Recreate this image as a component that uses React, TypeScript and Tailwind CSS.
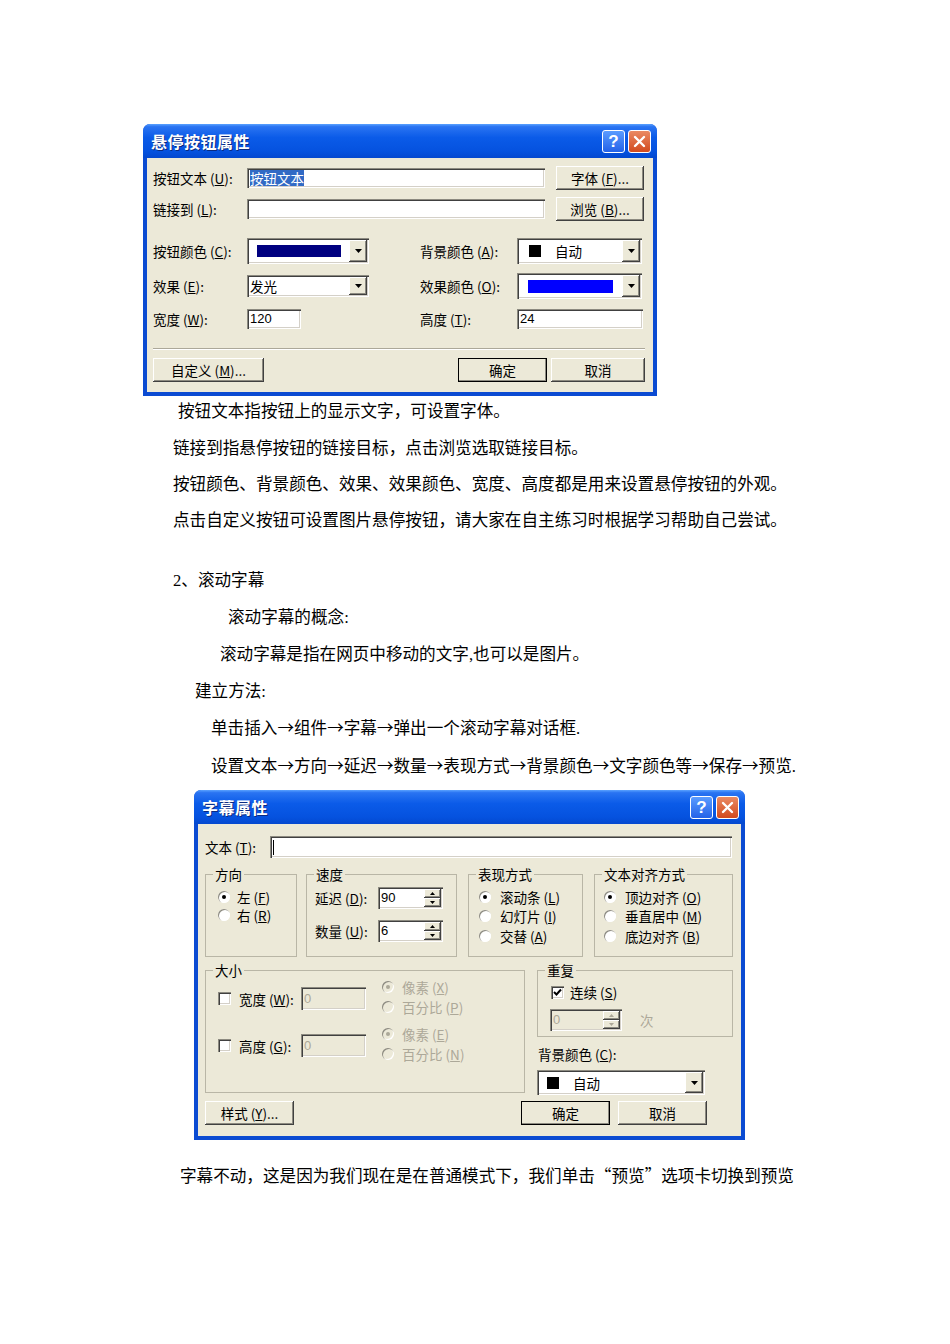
import React from 'react'

const raised =
  'bg-[#ece9d8] shadow-[inset_-1px_-1px_0_#404040,inset_1px_1px_0_#ffffff,inset_-2px_-2px_0_#8c8a80]'
const sunken =
  'shadow-[inset_1px_1px_0_#8c8a80,inset_2px_2px_0_#404040,inset_-1px_-1px_0_#ffffff,inset_-2px_-2px_0_#d4d0c8]'

function K({ k }: { k: string }) {
  return (
    <>
      {' '}(<span className="underline">{k}</span>)
    </>
  )
}

// full-width glyphs (arrows, quotes) taken from the CJK font
function W({ c }: { c: string }) {
  return <span className="font-['Noto_Sans_CJK_SC',sans-serif] leading-none">{c}</span>
}

function TitleBar({ title }: { title: string }) {
  return (
    <div className="h-[34px] flex items-center justify-between pl-[8px] pr-[6px] bg-[linear-gradient(to_bottom,#5aa2ff_0%,#2a74f2_8%,#0b5be8_40%,#0552df_80%,#0448cf_100%)]">
      <span className="text-white font-bold text-[16px] tracking-[0.5px] [text-shadow:1px_1px_0_#0a2a80]">
        {title}
      </span>
      <div className="flex gap-[3px] mt-[1px]">
        <div className="w-[23px] h-[23px] rounded-[3px] border border-white bg-[linear-gradient(to_bottom,#5a9cff,#2462e8)] flex items-center justify-center text-white font-bold text-[17px] leading-none font-['Liberation_Sans',sans-serif]">
          ?
        </div>
        <div className="w-[23px] h-[23px] rounded-[3px] border border-white bg-[linear-gradient(to_bottom,#ea8a63,#d24a1e)] flex items-center justify-center">
          <svg width="13" height="13" viewBox="0 0 13 13">
            <path d="M2 2 L11 11 M11 2 L2 11" stroke="#ffffff" strokeWidth="2.4" strokeLinecap="round" />
          </svg>
        </div>
      </div>
    </div>
  )
}

function Btn({ children, className = '', def = false }: { children: React.ReactNode; className?: string; def?: boolean }) {
  return (
    <div
      className={`h-[24px] flex items-center justify-center ${raised} ${def ? 'outline outline-1 outline-black -outline-offset-1' : ''} ${className}`}
    >
      {children}
    </div>
  )
}

function Arrow() {
  return (
    <svg width="7" height="4" viewBox="0 0 7 4">
      <polygon points="0,0 7,0 3.5,4" fill="#000000" />
    </svg>
  )
}

function Combo({ children, className = '' }: { children?: React.ReactNode; className?: string }) {
  return (
    <div className={`bg-white ${sunken} flex items-center p-[2px] ${className}`}>
      <div className="flex-1 flex items-center h-full">{children}</div>
      <div className={`w-[18px] h-full flex items-center justify-center ${raised}`}>
        <Arrow />
      </div>
    </div>
  )
}

function Field({ children, className = '', disabled = false }: { children?: React.ReactNode; className?: string; disabled?: boolean }) {
  return (
    <div
      className={`${disabled ? 'bg-[#ece9d8] text-[#aca899]' : 'bg-white'} ${sunken} flex items-center pl-[3px] text-[13px] font-['Liberation_Sans','Noto_Sans_CJK_SC',sans-serif] ${className}`}
    >
      {children}
    </div>
  )
}

function Spin({ value, className = '', disabled = false }: { value: string; className?: string; disabled?: boolean }) {
  return (
    <div
      className={`${disabled ? 'bg-[#ece9d8] text-[#aca899]' : 'bg-white'} ${sunken} flex items-center p-[2px] h-[22px] ${className}`}
    >
      <span className="flex-1 pl-[1px] text-[13px] font-['Liberation_Sans',sans-serif]">{value}</span>
      <div className="w-[17px] h-full flex flex-col">
        <div className={`flex-1 flex items-center justify-center ${raised}`}>
          <svg width="5" height="3" viewBox="0 0 5 3">
            <polygon points="0,3 5,3 2.5,0" fill={disabled ? '#aca899' : '#000000'} />
          </svg>
        </div>
        <div className={`flex-1 flex items-center justify-center ${raised}`}>
          <svg width="5" height="3" viewBox="0 0 5 3">
            <polygon points="0,0 5,0 2.5,3" fill={disabled ? '#aca899' : '#000000'} />
          </svg>
        </div>
      </div>
    </div>
  )
}

function Radio({ checked = false, disabled = false }: { checked?: boolean; disabled?: boolean }) {
  return (
    <span
      className={`w-[12px] h-[12px] rounded-full ${disabled ? 'bg-[#ece9d8]' : 'bg-white'} shadow-[inset_1px_1px_0_#8c8a80,inset_-1px_-1px_0_#ffffff] flex items-center justify-center shrink-0`}
    >
      {checked && <span className={`w-[4px] h-[4px] rounded-full ${disabled ? 'bg-[#aca899]' : 'bg-black'}`} />}
    </span>
  )
}

function Check({ checked = false }: { checked?: boolean }) {
  return (
    <span className={`w-[13px] h-[13px] bg-white ${sunken} flex items-center justify-center shrink-0`}>
      {checked && (
        <svg width="9" height="9" viewBox="0 0 9 9">
          <path d="M1 4 L3.5 6.5 L8 1.5" stroke="#000000" strokeWidth="2" fill="none" />
        </svg>
      )}
    </span>
  )
}

function Group({ title, className = '', children }: { title: string; className?: string; children?: React.ReactNode }) {
  return (
    <fieldset className={`border border-[#b9b6a6] ${className}`}>
      <legend className="ml-[7px] px-[2px] leading-[16px]">{title}</legend>
      {children}
    </fieldset>
  )
}

function HoverButtonDialog() {
  return (
    <div className="w-[514px] ml-[143px] rounded-t-[7px] overflow-hidden bg-[#0b4bd2] font-['Noto_Sans_CJK_SC',sans-serif]">
      <TitleBar title="悬停按钮属性" />
      <div className="bg-[#ece9d8] mx-[4px] mb-[4px] pt-[8px] pl-[6px] pr-[8px] pb-[10px] text-[13.5px] text-black">
        <div className="flex items-center h-[24px]">
          <span className="w-[94px]">
            按钮文本<K k="U" />:
          </span>
          <Field className="w-[298px] h-[20px]">
            <span className="bg-[#316ac5] text-white font-['Noto_Sans_CJK_SC',sans-serif] text-[13.5px] leading-[16px]">按钮文本</span>
          </Field>
          <Btn className="ml-[11px] w-[88px]">
            字体<K k="F" />...
          </Btn>
        </div>
        <div className="flex items-center h-[24px] mt-[7px]">
          <span className="w-[94px]">
            链接到<K k="L" />:
          </span>
          <Field className="w-[298px] h-[20px]" />
          <Btn className="ml-[11px] w-[88px]">
            浏览<K k="B" />...
          </Btn>
        </div>
        <div className="flex items-center h-[26px] mt-[17px]">
          <span className="w-[94px]">
            按钮颜色<K k="C" />:
          </span>
          <Combo className="w-[122px] h-[26px]">
            <span className="w-[84px] h-[12px] bg-[#000080] ml-[8px]" />
          </Combo>
          <span className="ml-[51px] w-[97px]">
            背景颜色<K k="A" />:
          </span>
          <Combo className="w-[125px] h-[26px]">
            <span className="w-[12px] h-[12px] bg-black ml-[10px]" />
            <span className="ml-[14px]">自动</span>
          </Combo>
        </div>
        <div className="flex items-center h-[26px] mt-[9px]">
          <span className="w-[94px]">
            效果<K k="E" />:
          </span>
          <Combo className="w-[122px] h-[22px]">
            <span className="ml-[1px]">发光</span>
          </Combo>
          <span className="ml-[51px] w-[97px]">
            效果颜色<K k="O" />:
          </span>
          <Combo className="w-[125px] h-[26px]">
            <span className="w-[85px] h-[13px] bg-[#0000ff] ml-[9px]" />
          </Combo>
        </div>
        <div className="flex items-center h-[20px] mt-[10px]">
          <span className="w-[94px]">
            宽度<K k="W" />:
          </span>
          <Field className="w-[54px] h-[20px]">120</Field>
          <span className="ml-[119px] w-[97px]">
            高度<K k="T" />:
          </span>
          <Field className="w-[126px] h-[20px]">24</Field>
        </div>
        <div className="mt-[19px] w-[492px] h-[2px] border-t border-t-[#aca899] border-b border-b-white" />
        <div className="flex items-center justify-between mt-[8px]">
          <Btn className="w-[111px]">
            自定义<K k="M" />...
          </Btn>
          <div className="flex gap-[4px]">
            <Btn def className="w-[89px]">
              确定
            </Btn>
            <Btn className="w-[94px]">取消</Btn>
          </div>
        </div>
      </div>
    </div>
  )
}

function MarqueeDialog() {
  const dis = 'text-[#aca899]'
  return (
    <div className="w-[551px] ml-[194px] mt-[11px] rounded-t-[7px] overflow-hidden bg-[#0b4bd2] font-['Noto_Sans_CJK_SC',sans-serif]">
      <TitleBar title="字幕属性" />
      <div className="bg-[#ece9d8] mx-[4px] mb-[4px] pt-[12px] pl-[7px] pb-[11px] text-[13.5px] text-black">
        <div className="flex items-center h-[22px]">
          <span className="w-[65px]">
            文本<K k="T" />:
          </span>
          <Field className="w-[462px] h-[22px]">
            <span className="w-[1px] h-[15px] bg-black" />
          </Field>
        </div>

        <div className="flex mt-[8px]">
          <Group title="方向" className="w-[92px] h-[91px]">
            <div className="pl-[12px] mt-[6px]">
              <div className="flex items-center h-[18px] gap-[7px]">
                <Radio checked />
                <span>
                  左<K k="F" />
                </span>
              </div>
              <div className="flex items-center h-[18px] gap-[7px]">
                <Radio />
                <span>
                  右<K k="R" />
                </span>
              </div>
            </div>
          </Group>
          <Group title="速度" className="w-[151px] h-[91px] ml-[9px]">
            <div className="pl-[8px] mt-[4px]">
              <div className="flex items-center">
                <span className="w-[63px]">
                  延迟<K k="D" />:
                </span>
                <Spin value="90" className="w-[65px]" />
              </div>
              <div className="flex items-center mt-[9px]">
                <span className="w-[63px]">
                  数量<K k="U" />:
                </span>
                <Spin value="6" className="w-[65px]" />
              </div>
            </div>
          </Group>
          <Group title="表现方式" className="w-[115px] h-[91px] ml-[11px]">
            <div className="pl-[10px] mt-[5px]">
              <div className="flex items-center h-[19.5px] gap-[9px]">
                <Radio checked />
                <span>
                  滚动条<K k="L" />
                </span>
              </div>
              <div className="flex items-center h-[19.5px] gap-[9px]">
                <Radio />
                <span>
                  幻灯片<K k="I" />
                </span>
              </div>
              <div className="flex items-center h-[19.5px] gap-[9px]">
                <Radio />
                <span>
                  交替<K k="A" />
                </span>
              </div>
            </div>
          </Group>
          <Group title="文本对齐方式" className="w-[139px] h-[91px] ml-[11px]">
            <div className="pl-[9px] mt-[5px]">
              <div className="flex items-center h-[19.5px] gap-[9px]">
                <Radio checked />
                <span>
                  顶边对齐<K k="O" />
                </span>
              </div>
              <div className="flex items-center h-[19.5px] gap-[9px]">
                <Radio />
                <span>
                  垂直居中<K k="M" />
                </span>
              </div>
              <div className="flex items-center h-[19.5px] gap-[9px]">
                <Radio />
                <span>
                  底边对齐<K k="B" />
                </span>
              </div>
            </div>
          </Group>
        </div>

        <div className="flex items-start mt-[5px]">
          <Group title="大小" className="w-[320px] h-[131px]">
            <div className="pl-[12px] mt-[9px]">
              <div className="flex items-center h-[23px]">
                <Check />
                <span className="ml-[8px] w-[62px]">
                  宽度<K k="W" />:
                </span>
                <Field disabled className="w-[65px] h-[23px]">
                  0
                </Field>
                <div className={`ml-[16px] flex flex-col -mt-[4px] ${dis}`}>
                  <div className="flex items-center h-[20px] gap-[8px]">
                    <Radio checked disabled />
                    <span>
                      像素<K k="X" />
                    </span>
                  </div>
                  <div className="flex items-center h-[20px] gap-[8px]">
                    <Radio disabled />
                    <span>
                      百分比<K k="P" />
                    </span>
                  </div>
                </div>
              </div>
              <div className="flex items-center h-[23px] mt-[24px]">
                <Check />
                <span className="ml-[8px] w-[62px]">
                  高度<K k="G" />:
                </span>
                <Field disabled className="w-[65px] h-[23px]">
                  0
                </Field>
                <div className={`ml-[16px] flex flex-col -mt-[4px] ${dis}`}>
                  <div className="flex items-center h-[20px] gap-[8px]">
                    <Radio checked disabled />
                    <span>
                      像素<K k="E" />
                    </span>
                  </div>
                  <div className="flex items-center h-[20px] gap-[8px]">
                    <Radio disabled />
                    <span>
                      百分比<K k="N" />
                    </span>
                  </div>
                </div>
              </div>
            </div>
          </Group>

          <div className="w-[196px] ml-[12px] flex flex-col">
            <Group title="重复" className="w-[196px] h-[75px]">
              <div className="pl-[13px] mt-[6px]">
                <div className="flex items-center h-[16px] gap-[6px]">
                  <Check checked />
                  <span>
                    连续<K k="S" />
                  </span>
                </div>
                <div className="flex items-center mt-[8px]">
                  <Spin disabled value="0" className="w-[72px] -ml-[1px]" />
                  <span className={`ml-[18px] ${dis}`}>次</span>
                </div>
              </div>
            </Group>
            <span className="leading-[16px] mt-[9px] ml-[1px]">
              背景颜色<K k="C" />:
            </span>
            <Combo className="w-[168px] h-[25px] mt-[8px]">
              <span className="w-[12px] h-[12px] bg-black ml-[8px]" />
              <span className="ml-[14px]">自动</span>
            </Combo>
          </div>
        </div>

        <div className="flex items-center mt-[6px]">
          <Btn className="w-[89px]">
            样式<K k="Y" />...
          </Btn>
          <Btn def className="w-[89px] ml-[227px]">
            确定
          </Btn>
          <Btn className="w-[89px] ml-[8px]">取消</Btn>
        </div>
      </div>
    </div>
  )
}

export default function App() {
  const a = <W c="→" />
  return (
    <div className="w-[950px] min-h-[1344px] bg-white pt-[124px] text-black text-[16.6px] leading-[24px] font-['Liberation_Serif','Noto_Sans_CJK_SC',serif]">
      <HoverButtonDialog />
      <p className="ml-[178px] mt-[4px] h-[24px]">按钮文本指按钮上的显示文字，可设置字体。</p>
      <p className="ml-[173px] mt-[13px] h-[24px]">链接到指悬停按钮的链接目标，点击浏览选取链接目标。</p>
      <p className="ml-[173px] mt-[12px] h-[24px]">按钮颜色、背景颜色、效果、效果颜色、宽度、高度都是用来设置悬停按钮的外观。</p>
      <p className="ml-[173px] mt-[12px] h-[24px]">点击自定义按钮可设置图片悬停按钮，请大家在自主练习时根据学习帮助自己尝试。</p>
      <p className="ml-[173px] mt-[36px] h-[24px]">2、滚动字幕</p>
      <p className="ml-[228px] mt-[13px] h-[24px]">滚动字幕的概念:</p>
      <p className="ml-[220px] mt-[13px] h-[24px]">滚动字幕是指在网页中移动的文字,也可以是图片。</p>
      <p className="ml-[195px] mt-[13px] h-[24px]">建立方法:</p>
      <p className="ml-[211px] mt-[13px] h-[24px]">
        单击插入{a}组件{a}字幕{a}弹出一个滚动字幕对话框.
      </p>
      <p className="ml-[211px] mt-[14px] h-[24px]">
        设置文本{a}方向{a}延迟{a}数量{a}表现方式{a}背景颜色{a}文字颜色等{a}保存{a}预览.
      </p>
      <MarqueeDialog />
      <p className="ml-[180px] mt-[25px] h-[24px]">
        字幕不动，这是因为我们现在是在普通模式下，我们单击<W c="“" />预览<W c="”" />选项卡切换到预览
      </p>
    </div>
  )
}
